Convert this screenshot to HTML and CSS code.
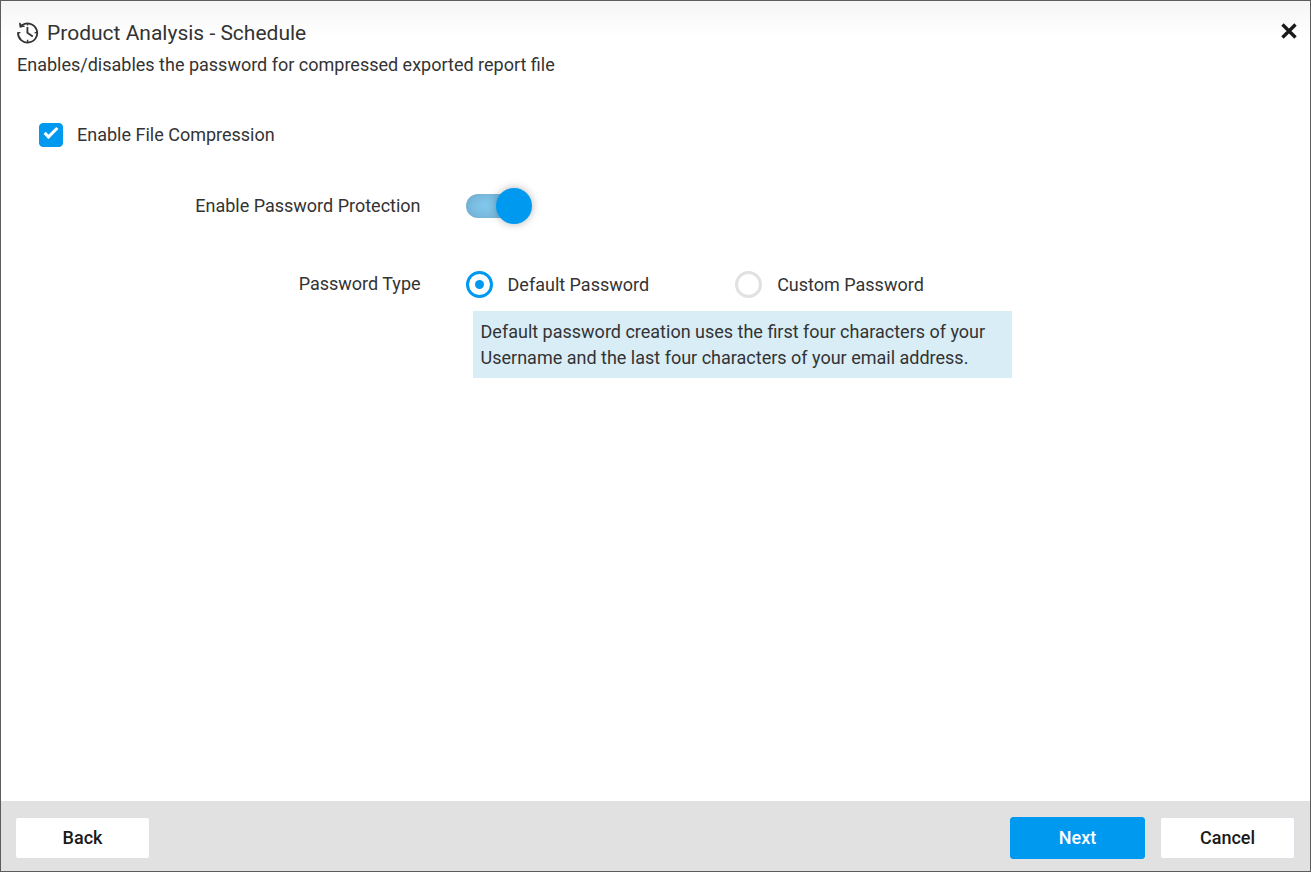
FILE: index.html
```html
<!DOCTYPE html>
<html lang="en">
<head>
    <meta charset="UTF-8">
    <meta name="viewport" content="width=device-width, initial-scale=1.0">
    <title>Product Analysis - Schedule</title>
    <link rel="stylesheet" href="styles.css">
</head>
<body>

    <form class="dialog">
        <header class="dialog-header">
            <div class="dialog-heading">
                <h1 class="dialog-title">
                    <svg class="title-icon" viewBox="0 0 22 22" fill="none" stroke="#333" aria-hidden="true">
                        <path d="M5 3.2A9.6 9.6 0 1 1 1 10.4" stroke-width="1.8"/>
                        <path d="M2.4 0.2L3 5.6L8 4.6L5.4 3.2Z" fill="#333" stroke="none"/>
                        <path d="M2.8 1L3.2 4.8L7.4 4.2" stroke-width="1.2"/>
                        <path d="M10.4 5V10.8L15.8 14.4" stroke-width="1.8"/>
                        <path d="M10.6 1.5V3.4M10.6 17.8V20M17.6 10.6H20M1 10.6H3.4" stroke-width="1.4"/>
                    </svg>
                    Product Analysis - Schedule
                </h1>
                <p class="dialog-subtitle">Enables/disables the password for compressed exported report file</p>
            </div>
            <button type="button" class="close-button" aria-label="Close">
                <svg class="close-icon" viewBox="0 0 16 16" aria-hidden="true">
                    <path d="M2.2 2.2L13.8 13.8M13.8 2.2L2.2 13.8" stroke="#1a1a1a" stroke-width="3"/>
                </svg>
            </button>
        </header>

        <main class="dialog-body">
            <label class="compression">
                <input type="checkbox" class="checkbox" checked>
                Enable File Compression
            </label>

            <div class="form-row">
                <label class="form-label" for="passwordProtection">Enable Password Protection</label>
                <input type="checkbox" id="passwordProtection" class="toggle" checked>
            </div>

            <div class="form-row" role="radiogroup" aria-labelledby="passwordType">
                <span class="form-label" id="passwordType">Password Type</span>
                <div class="radio-group">
                    <label class="radio-option">
                        <input type="radio" name="passwordType" class="radio" checked>
                        Default Password
                    </label>
                    <label class="radio-option">
                        <input type="radio" name="passwordType" class="radio">
                        Custom Password
                    </label>
                </div>
                <p class="form-note">Default password creation uses the first four characters of your Username and the last four characters of your email address.</p>
            </div>
        </main>

        <footer class="dialog-footer">
            <button type="button" class="button button-back">Back</button>
            <button type="submit" class="button button-primary">Next</button>
            <button type="button" class="button">Cancel</button>
        </footer>
    </form>

</body>
</html>
```

FILE: styles.css
```css
* {
    box-sizing: border-box;
}

body {
    margin: 0;
    font-family: Roboto, "Liberation Sans", sans-serif;
    font-size: 18px;
    line-height: 26px;
    color: #333;
}

.dialog {
    display: flex;
    flex-direction: column;
    min-height: 100vh;
    border: 1px solid #5c5c5c;
    background-color: #fff;
}

/* Header */
.dialog-header {
    display: flex;
    justify-content: space-between;
    align-items: flex-start;
    padding: 16px 10px 0 16px;
    background: linear-gradient(#f5f5f5, #fff 36px);
}

.dialog-title {
    display: flex;
    align-items: center;
    gap: 8px;
    margin: 0;
    font-size: 21px;
    font-weight: 400;
    line-height: 32px;
}

.title-icon {
    width: 22px;
    height: 22px;
}

.dialog-subtitle {
    margin: 3px 0 0;
}

.close-button {
    display: flex;
    margin: 3px 0 0;
    padding: 2px;
    border: none;
    background: none;
    cursor: pointer;
}

.close-icon {
    width: 18px;
    height: 18px;
}

/* Form */
.dialog-body {
    flex: 1;
    padding-top: 44px;
}

.compression {
    display: flex;
    align-items: center;
    gap: 14px;
    width: fit-content;
    margin-left: 38px;
}

.checkbox,
.toggle,
.radio {
    appearance: none;
    flex: none;
    margin: 0;
    cursor: pointer;
}

.checkbox {
    width: 24px;
    height: 24px;
    border: 1px solid #ccc;
    border-radius: 4px;
}

.checkbox:checked {
    display: grid;
    justify-items: center;
    align-items: start;
    border-color: #0099f0;
    background-color: #0099f0;
}

.checkbox:checked::before {
    content: "";
    width: 11px;
    height: 4px;
    margin-top: 4px;
    border: solid #fff;
    border-width: 0 0 3px 3px;
    transform: rotate(-45deg);
}

.form-row {
    display: grid;
    grid-template-columns: 32% 1fr;
    column-gap: 45px;
    align-items: center;
    margin-top: 40px;
    padding-left: 1px;
}

.form-label {
    padding-bottom: 1px;
    text-align: right;
}

.toggle {
    display: flex;
    align-items: center;
    width: 66px;
    height: 36px;
}

.toggle::before {
    content: "";
    width: 60px;
    height: 24px;
    border-radius: 12px;
    background-color: #ccc;
    box-shadow: inset 0 0 16px rgba(0, 0, 0, 0.2);
}

.toggle::after {
    content: "";
    width: 36px;
    height: 36px;
    margin-left: -60px;
    border-radius: 50%;
    background-color: #fff;
    box-shadow: 0 0 8px rgba(0, 0, 0, 0.3);
}

.toggle:checked::before {
    background-color: #84caf1;
}

.toggle:checked::after {
    margin-left: -30px;
    background-color: #0099f0;
}

.form-row + .form-row {
    margin-top: 47px;
}

.radio-group {
    display: flex;
    flex-wrap: wrap;
    gap: 12px 86px;
}

.radio-option {
    display: flex;
    align-items: center;
    gap: 15px;
}

.radio {
    display: grid;
    place-items: center;
    width: 27px;
    height: 27px;
    border: 3px solid #e1e1e1;
    border-radius: 50%;
}

.radio:checked {
    border-color: #0099f0;
}

.radio:checked::before {
    content: "";
    width: 9px;
    height: 9px;
    border-radius: 50%;
    background-color: #0099f0;
}

.form-note {
    grid-column: 2;
    max-width: 539px;
    margin: 13px 16px 0 7px;
    padding: 8px 8px 7px;
    background-color: #d9edf7;
}

/* Footer */
.dialog-footer {
    display: flex;
    gap: 15px;
    padding: 16px 15px 12px 14px;
    background-color: #e1e1e1;
}

.button {
    width: 135px;
    height: 42px;
    border: 1px solid #dde1e6;
    border-radius: 3px;
    background-color: #fff;
    color: #1a1a1a;
    font: inherit;
    font-weight: 500;
    cursor: pointer;
}

.button-primary {
    border-color: #0099f0;
    background-color: #0099f0;
    color: #fff;
}

.button-back {
    margin-right: auto;
}
```
